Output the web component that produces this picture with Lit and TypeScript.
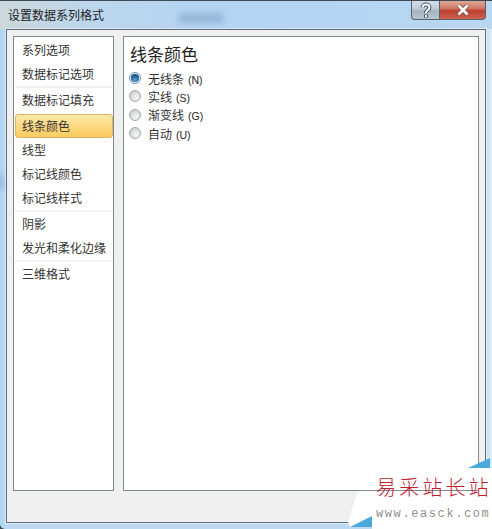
import { LitElement, html, css } from 'lit';
import { customElement } from 'lit/decorators.js';

type NavItem = { label: string; selected?: boolean; divider?: boolean };

const NAV_ITEMS: NavItem[] = [
  { label: '系列选项' },
  { label: '数据标记选项', divider: true },
  { label: '数据标记填充' },
  { label: '线条颜色', selected: true },
  { label: '线型' },
  { label: '标记线颜色' },
  { label: '标记线样式', divider: true },
  { label: '阴影' },
  { label: '发光和柔化边缘', divider: true },
  { label: '三维格式' },
];

const LINE_OPTIONS = [
  { label: '无线条', key: 'N', checked: true },
  { label: '实线', key: 'S' },
  { label: '渐变线', key: 'G' },
  { label: '自动', key: 'U' },
];

@customElement('app-root')
export class AppRoot extends LitElement {
  static styles = css`
    :host {
      display: block;
      width: 492px;
      height: 529px;
      overflow: hidden;
      position: relative;
      background: #3b4650;
      font-family: 'Noto Sans CJK SC', 'Liberation Sans', sans-serif;
      color: #222;
    }

    .window {
      box-sizing: border-box;
      width: 492px;
      height: 529px;
      display: flex;
      flex-direction: column;
      padding: 0 6px 6px 6px;
      border-radius: 6px 6px 0 5px;
      background: linear-gradient(90deg, #b0d4f0 0, #bcdaf2 6px, #bcdaf2 485px, #e4eff8 100%);
      border-top: 1px solid #3d4a55;
      position: relative;
    }

    /* blurred desktop showing through the glass frame */
    .glass {
      position: absolute;
      background: #7c9cc0;
      filter: blur(3px);
      opacity: 0.55;
    }

    .glass.top {
      left: 179px;
      top: 12px;
      width: 44px;
      height: 10px;
    }

    .glass.side {
      left: -2px;
      top: 174px;
      width: 5px;
      height: 15px;
      background: #6f8fd0;
    }

    .titlebar {
      height: 28px;
      flex: none;
      display: flex;
      align-items: flex-start;
      justify-content: space-between;
      background: linear-gradient(90deg, #ccd8da 0%, #bcd6ec 18%, #b3d4f3 45%, #b8d6f0 100%);
      margin: 0 -6px;
      padding: 0 6px 0 8px;
    }

    .title {
      font-size: 12px;
      line-height: 12px;
      margin-top: 8px;
      color: #1c2228;
      position: relative;
    }

    .caption {
      display: flex;
      position: relative;
    }

    .cap-btn {
      height: 19px;
      box-sizing: border-box;
      display: flex;
      align-items: center;
      justify-content: center;
      border: 1px solid #56626e;
      border-top: none;
    }

    .help {
      width: 28px;
      border-radius: 0 0 0 4px;
      border-right: none;
      background: linear-gradient(180deg, #cfdde8 0%, #bccbd8 45%, #a3b4c2 55%, #b7c6d2 100%);
    }

    .close {
      width: 47px;
      border-radius: 0 0 4px 0;
      background: linear-gradient(180deg, #dba797 0%, #d27a68 40%, #bc3f30 55%, #d0634e 100%);
    }

    .panel {
      flex: 1;
      min-height: 0;
      box-sizing: border-box;
      background: #f0f0f0;
      border: 1px solid #5f6b78;
      box-shadow: 0 0 0 1px rgba(255, 255, 255, 0.45);
      padding: 6px 6px 31px 6px;
      display: flex;
      gap: 9px;
      position: relative;
    }

    .nav,
    .content {
      box-sizing: border-box;
      background: #fff;
      border: 1px solid #828790;
    }

    .nav {
      width: 101px;
      flex: none;
      padding: 1px 0 0 1px;
    }

    .nav-item {
      box-sizing: border-box;
      height: 24px;
      padding-left: 6px;
      font-size: 12px;
      line-height: 21px;
      border: 1px solid transparent;
      color: #333;
      white-space: nowrap;
    }

    .nav-item.selected {
      margin-top: 2px;
      line-height: 22px;
      border: 1px solid #d9b568;
      border-radius: 3px;
      background: linear-gradient(180deg, #fde9a9 0%, #fdd87f 55%, #fccb5e 100%);
    }

    .nav-item.divider {
      margin-bottom: 2px;
      box-shadow: 0 2px 0 #f1f1f1;
    }

    .content {
      flex: 1;
      padding: 5px 6px;
    }

    h2 {
      margin: 0 0 3px;
      font-size: 17px;
      line-height: 24px;
      font-weight: 400;
      color: #222;
    }

    .option {
      display: flex;
      align-items: center;
      height: 18.3px;
      gap: 7px;
      font-size: 12px;
      color: #333;
    }

    .key {
      font-family: 'Liberation Sans', sans-serif;
      font-size: 10.5px;
      margin-left: 4px;
      color: #222;
    }

    .radio {
      box-sizing: border-box;
      width: 12px;
      height: 12px;
      margin-left: -1px;
      flex: none;
      border-radius: 50%;
      border: 1px solid #a3a8ac;
      background: radial-gradient(circle at 65% 70%, #f6f6f6 0%, #dcdcdc 55%, #bdbdbd 100%);
      display: flex;
      align-items: center;
      justify-content: center;
    }

    .radio.checked {
      border-color: #6f94ae;
      background: #e8eef2;
    }

    .radio.checked::after {
      content: '';
      width: 8px;
      height: 8px;
      border-radius: 50%;
      background: radial-gradient(circle at 50% 72%, #5fa6d6 0%, #1f5f95 55%, #123f68 100%);
    }

    .watermark {
      position: absolute;
      left: 340px;
      top: 440px;
      width: 152px;
      height: 89px;
    }

    .wm-bg {
      position: absolute;
      inset: 0;
    }

    .wm-text {
      position: absolute;
      left: 36px;
      top: 34px;
      font-size: 20px;
      line-height: 26px;
      letter-spacing: 3.2px;
      font-weight: 300;
      color: #c0202e;
      white-space: nowrap;
    }

    .wm-url {
      position: absolute;
      left: 36px;
      top: 67px;
      font-family: 'Liberation Mono', monospace;
      font-size: 12px;
      line-height: 14px;
      letter-spacing: 1.6px;
      color: #8f8f8f;
      white-space: nowrap;
    }
  `;

  render() {
    return html`
      <div class="window">
        <div class="titlebar">
          <div class="title">设置数据系列格式</div>
          <div class="caption">
            <div class="cap-btn help">
              <svg width="14" height="17" viewBox="0 0 14 17">
                <path d="M3.5 5.5 C3.5 1.5 10.5 1.5 10.5 5.5 C10.5 8 7 8 7 11" fill="none" stroke="#46525e" stroke-width="4" />
                <path d="M7 12.5 V15.5" stroke="#46525e" stroke-width="4" />
                <path d="M3.5 5.5 C3.5 1.5 10.5 1.5 10.5 5.5 C10.5 8 7 8 7 11" fill="none" stroke="#fff" stroke-width="2" />
                <path d="M7 13 V15" stroke="#fff" stroke-width="2" />
              </svg>
            </div>
            <div class="cap-btn close">
              <svg width="16" height="12" viewBox="0 0 16 12">
                <path d="M3.5 1.5 L12.5 10.5 M12.5 1.5 L3.5 10.5" stroke="#7a4a42" stroke-width="4.4" fill="none" />
                <path d="M3.5 1.5 L12.5 10.5 M12.5 1.5 L3.5 10.5" stroke="#fff" stroke-width="2.8" fill="none" />
              </svg>
            </div>
          </div>
        </div>
        <div class="panel">
          <div class="nav">
            ${NAV_ITEMS.map(
              (item) => html`
                <div class="nav-item ${item.selected ? 'selected' : ''} ${item.divider ? 'divider' : ''}">
                  ${item.label}
                </div>
              `
            )}
          </div>
          <div class="content">
            <h2>线条颜色</h2>
            ${LINE_OPTIONS.map(
              (opt) => html`
                <div class="option">
                  <span class="radio ${opt.checked ? 'checked' : ''}"></span>
                  <span>${opt.label}<span class="key">(${opt.key})</span></span>
                </div>
              `
            )}
          </div>
        </div>
        <div class="glass top"></div>
        <div class="glass side"></div>
      </div>
      <div class="watermark">
        <svg class="wm-bg" width="152" height="89" viewBox="0 0 152 89">
          <polygon points="138,28 152,28 152,89 32,89 32,87 10,87 8,82 18,51 138,51" fill="#fff" />
          <polygon points="128,28 150,18 150,28" fill="#4aa8da" />
          <polygon points="10,87 32,76 32,87" fill="#4aa8da" />
        </svg>
        <div class="wm-text">易采站长站</div>
        <div class="wm-url">www.easck.com</div>
      </div>
    `;
  }
}
